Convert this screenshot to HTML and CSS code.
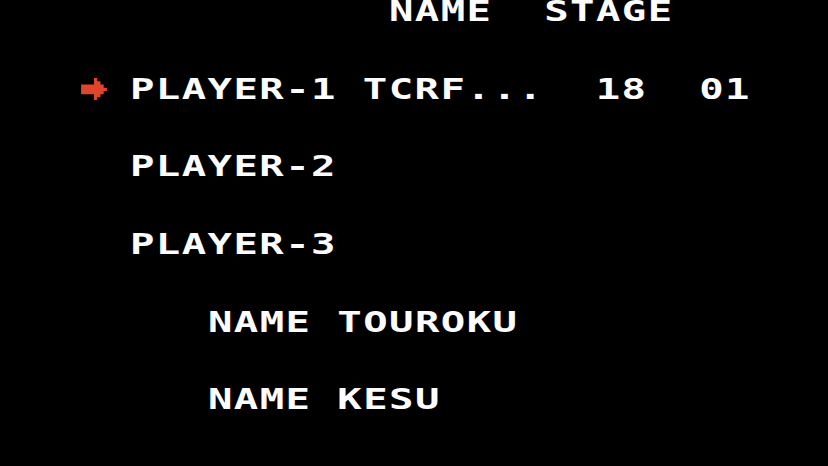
FILE: index.html
```html
<!DOCTYPE html>
<html lang="en">
<head>
  <meta charset="UTF-8">
  <meta name="viewport" content="width=device-width, initial-scale=1">
  <title>Player Select</title>
  <link rel="stylesheet" href="styles.css">
</head>
<body>
  <main class="screen">
    <div class="row indent-15">
      <span class="txt">NAME  STAGE</span>
    </div>
    <div class="row indent-3 selected">
      <span class="cursor">
        <svg viewBox="0 0 8 7" width="26" height="22.6" aria-hidden="true">
          <polygon points="0,2 4,2 4,0 5,0 5,1 6,1 6,2 7,2 7,3 8,3 8,4 7,4 7,5 6,5 6,6 5,6 5,7 4,7 4,5 0,5"/>
        </svg>
      </span>
      <span class="txt">PLAYER-1 TCRF...  18  01</span>
    </div>
    <div class="row indent-5">
      <span class="txt">PLAYER-2</span>
    </div>
    <div class="row indent-5">
      <span class="txt">PLAYER-3</span>
    </div>
    <div class="row indent-8">
      <span class="txt">NAME TOUROKU</span>
    </div>
    <div class="row indent-8">
      <span class="txt">NAME KESU</span>
    </div>
  </main>
</body>
</html>
```

FILE: styles.css
```css
/* Reset */
* { margin: 0; padding: 0; box-sizing: border-box; }
html, body {
  height: 100%;
  background: #000;
  overflow: hidden;
}

/* one tile = 8 screen pixels */
:root {
  --cell: 25.875px;
}

.screen {
  display: flex;
  flex-direction: column;
  width: 828px;
  height: 466px;
  background: #000;
  color: #fcfcfc;
  font-family: 'DejaVu Sans Mono', 'Liberation Mono', monospace;
  font-weight: bold;
  font-size: 29px;
  line-height: 23.5px;
}

.row {
  display: flex;
  align-items: flex-start;
  height: calc(var(--cell) * 3);
  flex-shrink: 0;
}

.indent-3  { padding-left: calc(var(--cell) * 3); }
.indent-5  { padding-left: calc(var(--cell) * 5); }
.indent-8  { padding-left: calc(var(--cell) * 8); }
.indent-15 { padding-left: calc(var(--cell) * 15); }

/* wide blocky letters on the tile grid */
.txt {
  display: inline-block;
  white-space: pre;
  letter-spacing: 1.02px;
  transform: scaleX(1.4);
  transform-origin: 0 0;
  margin-left: 1px;
}

.cursor {
  display: block;
  width: calc(var(--cell) * 2);
  flex-shrink: 0;
  padding-left: 3px;
}
.cursor svg {
  display: block;
  fill: #e0442c;
}
```
